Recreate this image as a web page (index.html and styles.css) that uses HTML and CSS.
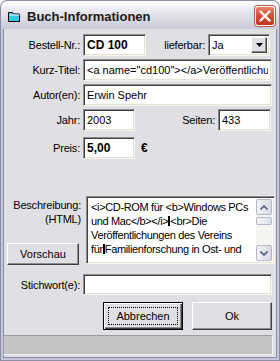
FILE: index.html
```html
<!DOCTYPE html>
<html lang="de">
<head>
    <meta charset="UTF-8">
    <title>Buch-Informationen</title>
    <link rel="stylesheet" href="styles.css">
</head>
<body>
    <div class="window">
        <div class="titlebar">
            <svg class="app-icon" width="13" height="11" viewBox="0 0 13 11">
                <path d="M0.5 1.5h4l1 1.5h6v7.5h-11z" fill="#33c7e0" stroke="#000"/>
                <path d="M1.5 4h10" stroke="#ffffff"/>
                <path d="M1 10.5h11" stroke="#000"/>
            </svg>
            <span class="title">Buch-Informationen</span>
            <div class="close-btn">
                <svg width="12" height="12" viewBox="0 0 12 12">
                    <path d="M1.5 1.5l9 9M10.5 1.5l-9 9" stroke="#fff" stroke-width="2.4" stroke-linecap="round"/>
                </svg>
            </div>
        </div>

        <div class="frame">
            <div class="client">
                <div class="row">
                    <label class="lbl">Bestell-Nr.:</label>
                    <input class="field field-short bold" type="text" value="CD 100">
                    <label class="lbl lbl-liefer">lieferbar:</label>
                    <div class="combo field">
                        <span class="combo-text">Ja</span>
                        <span class="combo-btn">
                            <svg width="7" height="4" viewBox="0 0 7 4"><path d="M0 0h7l-3.5 4z" fill="#000"/></svg>
                        </span>
                    </div>
                </div>
                <div class="row">
                    <label class="lbl">Kurz-Titel:</label>
                    <input class="field field-wide" type="text" value='&lt;a name="cd100"&gt;&lt;/a&gt;Veröffentlichungen'>
                </div>
                <div class="row">
                    <label class="lbl">Autor(en):</label>
                    <input class="field field-wide" type="text" value="Erwin Spehr">
                </div>
                <div class="row">
                    <label class="lbl">Jahr:</label>
                    <input class="field field-num" type="text" value="2003">
                    <label class="lbl lbl-seiten">Seiten:</label>
                    <input class="field field-pages" type="text" value="433">
                </div>
                <div class="row row-preis">
                    <label class="lbl">Preis:</label>
                    <input class="field field-num bold" type="text" value="5,00">
                    <span class="euro">€</span>
                </div>

                <div class="memo-row">
                    <div class="memo-side">
                        <label class="lbl-memo">Beschreibung:<br>(HTML)</label>
                        <button class="btn btn-preview" type="button">Vorschau</button>
                    </div>
                    <div class="memo field">
                        <div class="memo-text">&lt;i&gt;CD-ROM für &lt;b&gt;Windows PCs<br>und Mac&lt;/b&gt;&lt;/i&gt;<span class="cr"></span>&lt;br&gt;Die<br>Veröffentlichungen des Vereins<br>für<span class="cr"></span>Familienforschung in Ost- und</div>
                        <div class="scrollbar">
                            <span class="sb-btn">
                                <svg width="8" height="5" viewBox="0 0 8 5"><path d="M0.5 4.5l3.5-3.5 3.5 3.5" fill="none" stroke="#4d6185" stroke-width="1.6"/></svg>
                            </span>
                            <span class="sb-thumb"></span>
                            <span class="sb-track"></span>
                            <span class="sb-btn">
                                <svg width="8" height="5" viewBox="0 0 8 5"><path d="M0.5 0.5l3.5 3.5 3.5-3.5" fill="none" stroke="#4d6185" stroke-width="1.6"/></svg>
                            </span>
                        </div>
                    </div>
                </div>

                <div class="row row-stich">
                    <label class="lbl">Stichwort(e):</label>
                    <input class="field field-wide" type="text" value="">
                </div>

                <div class="actions">
                    <button class="btn btn-default" type="button"><span class="focus">Abbrechen</span></button>
                    <button class="btn btn-ok" type="button">Ok</button>
                </div>

                <div class="statusbar"></div>
            </div>
        </div>
    </div>
</body>
</html>
```

FILE: styles.css
```css
* {
    box-sizing: border-box;
}

body {
    margin: 0;
    padding: 0;
    font-family: "Liberation Sans", Arial, sans-serif;
    font-size: 11px;
    color: #000000;
    background-color: #ffffff;
}

.window {
    width: 280px;
    height: 361px;
    display: flex;
    flex-direction: column;
}

.titlebar {
    height: 29px;
    flex: none;
    display: flex;
    align-items: center;
    padding: 0 7px 0 7px;
    border-radius: 7px 7px 0 0;
    border: 1px solid #8c8ca5;
    border-bottom: none;
    background: linear-gradient(to bottom, #ffffff 0%, #eeeef4 25%, #dcdce6 60%, #c9c9d8 100%);
}

.app-icon {
    flex: none;
    margin-top: 2px;
}

.title {
    margin-left: 6px;
    font-size: 13px;
    font-weight: bold;
    color: #1a1a1a;
    margin-top: 2px;
}

.close-btn {
    margin-left: auto;
    width: 20px;
    height: 20px;
    margin-top: 1px;
    margin-right: -3px;
    display: flex;
    align-items: center;
    justify-content: center;
    border: 1px solid #ffffff;
    border-radius: 3px;
    background: linear-gradient(to bottom, #e8836c 0%, #d8523b 45%, #c3341f 100%);
    box-shadow: 0 0 0 1px #b35a50;
}

.frame {
    flex: 1;
    display: flex;
    border: 1px solid #8c8ca5;
    border-top: none;
}

.client {
    flex: 1;
    display: flex;
    flex-direction: column;
    padding-top: 5px;
    background-color: #e0dfe3;
    border: 2px solid #c5c6d6;
    border-top: none;
    box-shadow: inset 1px 0 #8a8ba6, inset -1px 0 #8a8ba6, inset 0 -1px #8a8ba6;
}

/* rows */

.row {
    display: flex;
    align-items: center;
    height: 22px;
    margin-bottom: 3px;
}

.lbl {
    width: 77px;
    flex: none;
    text-align: right;
    margin-right: 3px;
    letter-spacing: -0.2px;
}

.lbl-liefer {
    width: 59px;
    margin-right: 3px;
}

.lbl-seiten {
    width: 80px;
    margin-right: 3px;
}

.row-preis {
    margin-top: 3px;
}

.row-stich {
    margin-top: 9px;
    height: 21px;
    margin-bottom: 0;
}

/* sunken fields */

.field {
    height: 100%;
    padding: 0 3px;
    font-family: "Liberation Sans", Arial, sans-serif;
    font-size: 11px;
    color: #000000;
    background-color: #ffffff;
    border: 1px solid;
    border-color: #8d8d8d #f6f6ee #f6f6ee #8d8d8d;
    box-shadow: inset 1px 1px 0 #404040, inset -1px -1px 0 #e4e2d8;
    outline: none;
}

.bold {
    font-size: 12px;
    font-weight: bold;
}

.field-short {
    width: 63px;
}

.field-wide {
    width: 189px;
}

.field-num {
    width: 52px;
}

.field-pages {
    width: 53px;
}

.euro {
    margin-left: 6px;
    font-size: 12px;
    font-weight: bold;
}

.combo {
    width: 62px;
    display: flex;
    align-items: center;
    padding: 2px 2px 2px 3px;
}

.combo-text {
    flex: 1;
}

.combo-btn {
    width: 16px;
    height: 16px;
    display: flex;
    align-items: center;
    justify-content: center;
    background-color: #e0dfe3;
    border: 1px solid;
    border-color: #ffffff #404040 #404040 #ffffff;
    box-shadow: inset -1px -1px 0 #8d8d8d;
}

/* memo */

.memo-row {
    display: flex;
    height: 69px;
    margin-top: 34px;
}

.memo-side {
    width: 80px;
    flex: none;
    display: flex;
    flex-direction: column;
    justify-content: space-between;
}

.lbl-memo {
    text-align: right;
    padding-right: 2px;
    line-height: 14px;
    padding-top: 2px;
    letter-spacing: -0.2px;
}

.memo {
    width: 189px;
    height: 68px;
    margin-left: 3px;
    padding: 2px;
    display: flex;
}

.memo-text {
    flex: 1;
    overflow: hidden;
    white-space: nowrap;
    line-height: 14px;
    padding-left: 2px;
    padding-top: 1px;
    letter-spacing: -0.35px;
}

.cr {
    display: inline-block;
    width: 2px;
    height: 10px;
    background-color: #000000;
    vertical-align: -1px;
}

.scrollbar {
    width: 16px;
    flex: none;
    display: flex;
    flex-direction: column;
    background-color: #f4f4f0;
}

.sb-btn {
    height: 16px;
    display: flex;
    align-items: center;
    justify-content: center;
    border: 1px solid #b5b8c8;
    border-radius: 2px;
    background: linear-gradient(to right, #f2f2f6, #d8d9e4);
}

.sb-thumb {
    height: 8px;
    margin-top: 2px;
    border: 1px solid #b5b8c8;
    border-radius: 2px;
    background: linear-gradient(to right, #f8f8fb, #dcdce6);
}

.sb-track {
    flex: 1;
}

/* buttons */

.btn {
    font-family: "Liberation Sans", Arial, sans-serif;
    font-size: 11px;
    color: #000000;
    background-color: #e0dfe3;
    border: 1px solid;
    border-color: #ffffff #404040 #404040 #ffffff;
    box-shadow: inset -1px -1px 0 #8d8d8d;
    padding: 0;
    cursor: pointer;
}

.btn-preview {
    width: 72px;
    height: 22px;
    margin-left: 4px;
}

.actions {
    display: flex;
    gap: 9px;
    margin-top: 7px;
    padding-left: 100px;
    height: 28px;
}

.btn-default,
.btn-ok {
    width: 80px;
    height: 28px;
}

.btn-default {
    border-color: #000000;
    box-shadow: inset 1px 1px 0 #ffffff, inset -1px -1px 0 #404040, inset -2px -2px 0 #8d8d8d;
    padding: 4px;
}

.btn-default .focus {
    display: flex;
    align-items: center;
    justify-content: center;
    height: 100%;
    border: 1px dotted #000000;
}

.statusbar {
    height: 20px;
    margin-top: 5px;
    margin-right: 4px;
    background-color: #c3c3c3;
    border: 1px solid;
    border-color: #9d9d9d #f2f2f2 #f2f2f2 #9d9d9d;
}
```
